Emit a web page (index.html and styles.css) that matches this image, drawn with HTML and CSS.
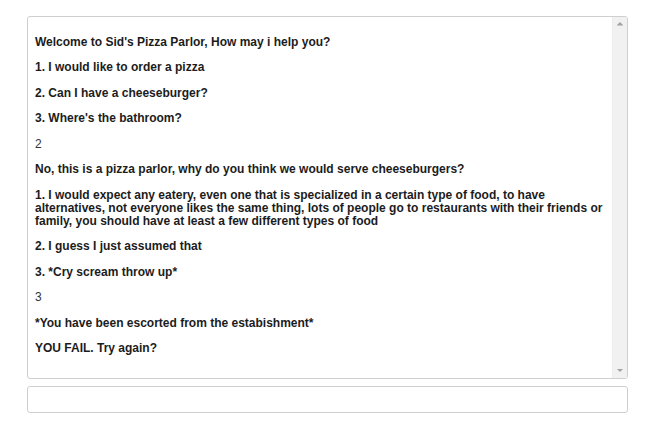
FILE: index.html
```html
<!DOCTYPE html>
<html>
<head>
<meta charset="utf-8">
<link rel="stylesheet" href="styles.css">
</head>
<body>
<div class="app">
  <div class="log">
    <div class="log-body">
      <p class="msg">Welcome to Sid's Pizza Parlor, How may i help you?</p>
      <p class="msg">1. I would like to order a pizza</p>
      <p class="msg">2. Can I have a cheeseburger?</p>
      <p class="msg">3. Where's the bathroom?</p>
      <p class="reply">2</p>
      <p class="msg">No, this is a pizza parlor, why do you think we would serve cheeseburgers?</p>
      <p class="msg">1. I would expect any eatery, even one that is specialized in a certain type of food, to have alternatives, not everyone likes the same thing, lots of people go to restaurants with their friends or family, you should have at least a few different types of food</p>
      <p class="msg">2. I guess I just assumed that</p>
      <p class="msg">3. *Cry scream throw up*</p>
      <p class="reply">3</p>
      <p class="msg">*You have been escorted from the estabishment*</p>
      <p class="msg">YOU FAIL. Try again?</p>
    </div>
    <div class="scrollbar">
      <span class="arrow up"></span>
      <span class="arrow down"></span>
    </div>
  </div>
  <input class="entry" type="text">
</div>
</body>
</html>
```
FILE: styles.css
```css
html, body {
  margin: 0;
  padding: 0;
  background: #fff;
}
.app {
  width: 601px;
  margin: 16px 0 0 27px;
  display: flex;
  flex-direction: column;
  gap: 7px;
  font-family: "Liberation Sans", Arial, sans-serif;
  font-size: 12px;
}
.log {
  box-sizing: border-box;
  height: 363px;
  border: 1px solid #cfcfcf;
  border-radius: 3px;
  display: flex;
  overflow: hidden;
}
.log-body {
  flex: 1;
  padding: 6px 7px 0 7px;
}
.log-body p {
  margin: 12.5px 0;
  line-height: 13px;
}
.msg {
  font-weight: bold;
  color: #1c1c1c;
}
.reply {
  color: #333;
}
.scrollbar {
  width: 14px;
  background: #f1f1f1;
  border-left: 1px solid #ececec;
  display: flex;
  flex-direction: column;
  justify-content: space-between;
  align-items: center;
  padding: 5px 0 6px;
}
.arrow {
  width: 0;
  height: 0;
  border-left: 3px solid transparent;
  border-right: 3px solid transparent;
}
.arrow.up {
  border-bottom: 3px solid #a3a3a3;
  box-shadow: 0 1px 0 #c8c8c8;
}
.arrow.down {
  border-top: 3px solid #a3a3a3;
}
.entry {
  box-sizing: border-box;
  height: 27px;
  width: 601px;
  border: 1px solid #cfcfcf;
  border-radius: 3px;
  margin: 0;
  padding: 4px 7px;
  font-family: "Liberation Sans", Arial, sans-serif;
  font-size: 12px;
  outline: none;
}
```
